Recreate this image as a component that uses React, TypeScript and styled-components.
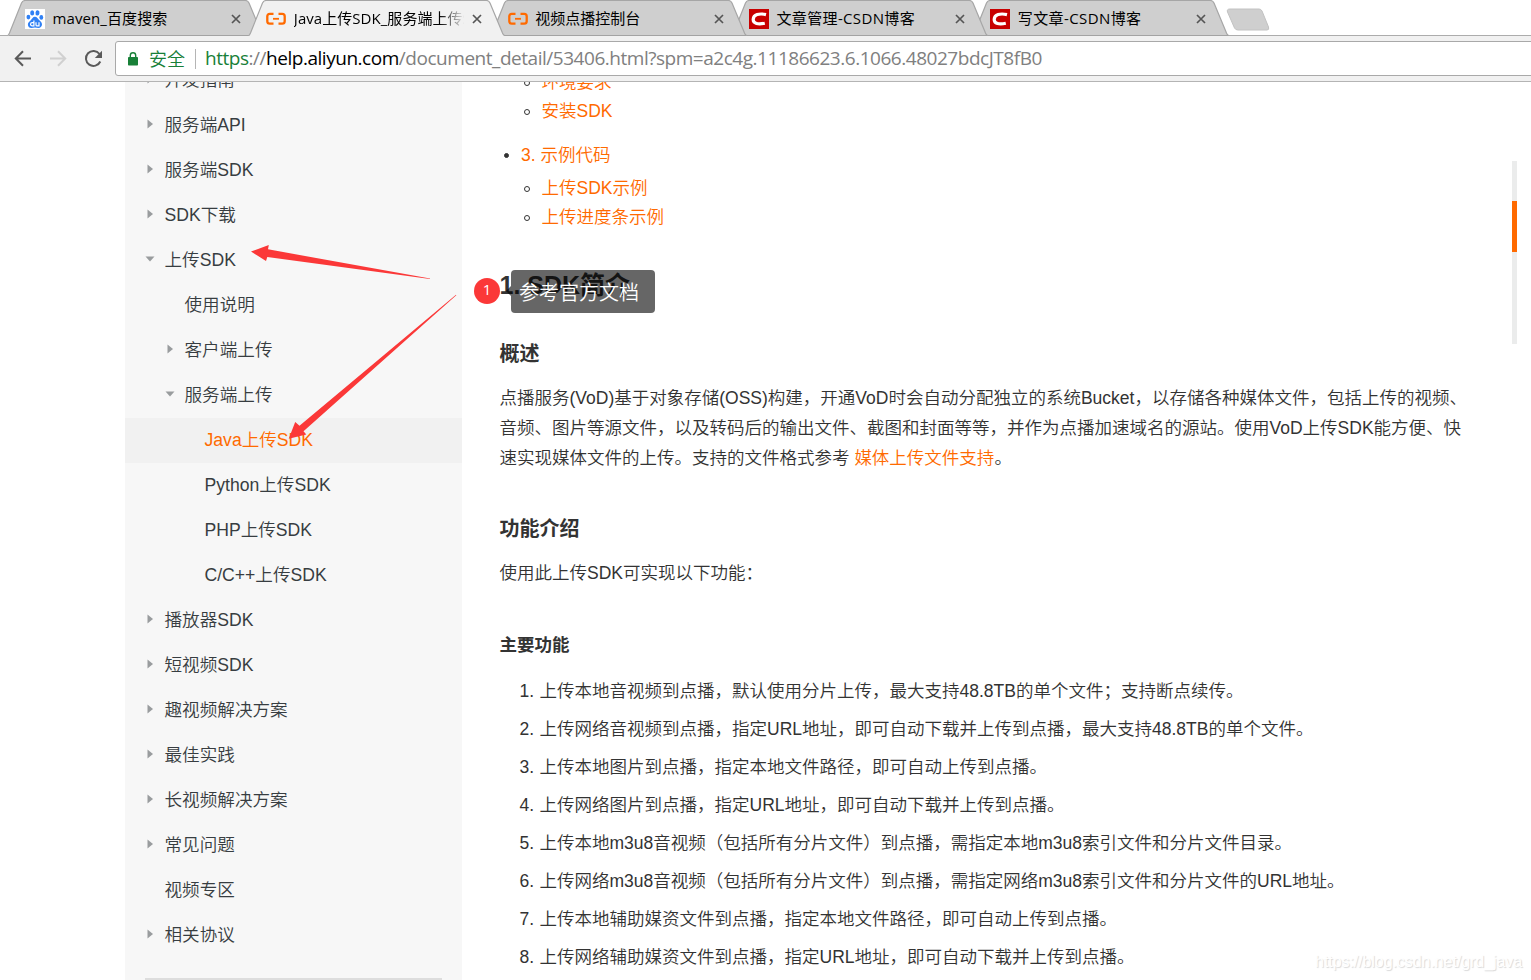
import React from "react";
import styled, { createGlobalStyle, css } from "styled-components";

const GlobalStyle = createGlobalStyle`
  * { box-sizing: border-box; }
  html, body { margin: 0; padding: 0; }
  body {
    background: #fff;
    font-family: "Liberation Sans", "Noto Sans CJK SC", sans-serif;
    font-weight: 350;
    overflow: hidden;
  }
  ul, ol, h1, h2, h3, p { margin: 0; padding: 0; list-style: none; }
`;

const uiFont = css`
  font-family: "Open Sans", "Noto Sans CJK SC", sans-serif;
  font-weight: 400;
`;

const Window = styled.div`
  position: relative;
  width: 1531px;
  height: 980px;
  display: flex;
  flex-direction: column;
  overflow: hidden;
`;

/* ---------- browser chrome ---------- */

const TabStrip = styled.div`
  display: flex;
  flex: none;
  height: 36px;
  padding-left: 7px;
  border-bottom: 1px solid #acacac;
  background: #fff;
`;

const TabItem = styled.div<{ $order: number }>`
  position: relative;
  z-index: ${(p) => p.$order};
  display: flex;
  align-items: center;
  flex: none;
  width: 258px;
  height: 36px;
  margin-right: -16.7px;
  padding: 1px 20px 0 18px;
`;

const TabShape = styled.svg`
  position: absolute;
  left: 0;
  top: 0;
  z-index: -1;
`;

const TabTitle = styled.span<{ $fade?: boolean; $tracking?: number }>`
  ${uiFont}
  flex: none;
  width: 170px;
  height: 24px;
  margin-left: 7.5px;
  overflow: hidden;
  white-space: nowrap;
  font-size: 15px;
  line-height: 22px;
  letter-spacing: ${(p) => p.$tracking ?? 0}px;
  color: #000;
  ${(p) =>
    p.$fade &&
    css`
      mask-image: linear-gradient(to right, #000 145px, transparent 171px);
    `}
`;

const CloseIcon = styled.svg`
  flex: none;
  margin-left: 8.5px;
`;

const NewTab = styled.svg`
  flex: none;
  margin: 8px 0 0 11px;
`;

const Toolbar = styled.div`
  display: flex;
  align-items: center;
  flex: none;
  height: 46px;
  border-bottom: 1px solid #b4b4b4;
  background: #f1f1f1;
`;

const NavIcons = styled.svg`
  flex: none;
  width: 115px;
  height: 45px;
`;

const AddressBar = styled.div`
  ${uiFont}
  display: flex;
  align-items: center;
  flex: 1;
  height: 35px;
  margin-right: -4px;
  padding-left: 12px;
  border: 1px solid #a9a9a9;
  border-radius: 3px;
  background: #fff;
  font-size: 19px;
  white-space: nowrap;
`;

const Secure = styled.span`
  margin-left: 11px;
  padding-right: 10px;
  border-right: 1px solid #b5b5b5;
  font-size: 18px;
  font-weight: 350;
  line-height: 20px;
  color: #188038;
`;

const Url = styled.span`
  margin-left: 9px;
  padding-bottom: 2px;
  letter-spacing: -0.47px;
  color: #808080;
`;

const Scheme = styled.span`
  color: #188038;
`;

const Host = styled.span`
  color: #000;
`;

/* ---------- page ---------- */

const Page = styled.div`
  display: flex;
  flex: 1;
  min-height: 0;
  padding-left: 125px;
  overflow: hidden;
`;

const Sidebar = styled.nav`
  flex: none;
  width: 337px;
  height: 898px;
  overflow: hidden;
  background: #f7f7f7;
`;

const Tree = styled.ul`
  margin-top: -24px;
`;

const TreeRow = styled.li<{ $level: number; $active?: boolean }>`
  display: flex;
  align-items: center;
  height: 45px;
  padding-left: ${(p) => 19 + p.$level * 20}px;
  padding-bottom: 4px;
  background: ${(p) => (p.$active ? "#f1f1f1" : "transparent")};
  color: ${(p) => (p.$active ? "#ff6a00" : "#373d41")};
  font-size: 17.6px;
  white-space: nowrap;
`;

const Caret = styled.svg`
  flex: none;
  width: 12px;
  height: 12px;
  margin-top: 1px;
  margin-right: 8.5px;
`;

const SidebarRule = styled.div`
  height: 2px;
  margin: 20px 20px 0;
  background: #ddd;
`;

const Article = styled.main`
  flex: none;
  width: 1050px;
  margin-top: -16px;
  padding-left: 37.5px;
  color: #333;
  font-size: 17.5px;
  white-space: nowrap;
`;

const TocItem = styled.div`
  display: flex;
  align-items: center;
  height: 30px;
  margin: 14px 0 4px;
  padding-left: 4.5px;
`;

const TocSubItem = styled.div`
  display: flex;
  align-items: center;
  height: 29px;
  padding-left: 24.5px;
`;

const Bullet = styled.i<{ $hollow?: boolean }>`
  flex: none;
  width: ${(p) => (p.$hollow ? 6 : 5)}px;
  height: ${(p) => (p.$hollow ? 6 : 5)}px;
  margin: 4px ${(p) => (p.$hollow ? 11.5 : 12)}px 0 0;
  border: 1px solid #333;
  border-radius: 50%;
  background: ${(p) => (p.$hollow ? "transparent" : "#333")};
`;

const Link = styled.a`
  color: #ff6a00;
`;

const Title = styled.h1`
  margin-top: 35px;
  font-size: 25px;
  line-height: 40px;
  font-weight: 700;
`;

const Heading = styled.h2<{ $gap: number }>`
  margin-top: ${(p) => p.$gap}px;
  font-size: 20px;
  line-height: 40px;
  font-weight: 700;
`;

const SubHeading = styled.h3`
  margin-top: 37px;
  font-size: 17.5px;
  line-height: 40px;
  font-weight: 700;
`;

const Paragraph = styled.p`
  margin-top: 9px;
  line-height: 30px;
`;

const Line = styled.span`
  display: block;
`;

const Features = styled.ol`
  margin-top: 7px;
`;

const Feature = styled.li`
  display: flex;
  height: 38px;
  line-height: 38px;
`;

const FeatureNumber = styled.span`
  width: 34.5px;
  margin-right: 5.5px;
  text-align: right;
`;

const FeatureText = styled.span``;

const ScrollRail = styled.div`
  flex: none;
  width: 5px;
  height: 183px;
  margin-top: 79px;
  margin-left: -0.5px;
  padding-top: 40px;
  background: #ebecec;
`;

const ScrollThumb = styled.div`
  height: 51px;
  background: #ff6a00;
`;

/* ---------- annotations over the page ---------- */

const Arrows = styled.svg`
  position: absolute;
  left: 0;
  top: 0;
  z-index: 20;
  pointer-events: none;
`;

const StepBadge = styled.div`
  position: absolute;
  left: 474px;
  top: 278px;
  z-index: 21;
  width: 26px;
  height: 26px;
  border-radius: 50%;
  background: #fb3838;
  color: #fff;
  ${uiFont}
  font-size: 15px;
  line-height: 23px;
  text-align: center;
`;

const Note = styled.div`
  position: absolute;
  left: 511px;
  top: 270px;
  z-index: 21;
  width: 144px;
  height: 43px;
  padding-left: 8px;
  border-radius: 4px;
  background: rgba(0, 0, 0, 0.6);
  color: #fff;
  font-size: 20px;
  line-height: 46px;
  white-space: nowrap;

  &::before {
    content: "";
    position: absolute;
    left: -5px;
    top: 16px;
    border: 5px solid transparent;
    border-left: 0;
    border-right-color: rgba(0, 0, 0, 0.6);
  }
`;

const Watermark = styled.div`
  position: absolute;
  right: 9px;
  bottom: 8px;
  z-index: 21;
  font-size: 16px;
  line-height: 20px;
  letter-spacing: -0.07px;
  color: #fff;
  text-shadow: 1px 1px 1px #d8d8d8;
`;

/* ---------- drawings ---------- */

const BaiduIcon = () => (
  <svg width="20" height="20" viewBox="0 0 20 20">
    <rect width="20" height="20" fill="#fff" />
    <g fill="#2f80f5">
      <ellipse cx="7.2" cy="3.9" rx="2" ry="2.7" />
      <ellipse cx="12.5" cy="3.9" rx="2" ry="2.7" transform="rotate(8 12.5 3.9)" />
      <ellipse cx="3.4" cy="8.1" rx="1.9" ry="2.4" />
      <ellipse cx="16.3" cy="8.4" rx="1.9" ry="2.4" />
      <path d="M9.9 7.8c2.2 0 2.9 1.9 4.2 3.3 1.400 1.400 3.100 2.500 2.900 4.700-.2 2-1.700 3.200-3.600 3.200-1.200 0-2.200-.4-3.500-.4s-2.200.4-3.400.4c-2 0-3.500-1.300-3.600-3.300-.1-2.100 1.500-3.100 2.900-4.500C7.200 9.700 7.800 7.800 9.900 7.800z" />
    </g>
    <g fill="none" stroke="#fff" strokeWidth="1.2">
      <path d="M8.900 11.600v5.300H7.200c-2.200 0-2.200-3.200 0-3.200h1.700" />
      <path d="M11 13.200v2.700c0 .8.400 1 1.100 1h1.900v-3.700" />
    </g>
  </svg>
);

const AliyunIcon = () => (
  <svg width="20" height="20" viewBox="0 0 20 20">
    <g fill="none" stroke="#ff6a00" strokeWidth="2.300">
      <path d="M7.500 4.900H3.800Q1.300 4.900 1.300 7.300v5q0 2.400 2.500 2.400h3.700" />
      <path d="M12.500 4.900h3.700q2.500 0 2.500 2.400v5q0 2.400-2.500 2.400h-3.700" />
    </g>
    <rect x="7" y="8.900" width="6" height="1.800" fill="#ff6a00" />
  </svg>
);

const CsdnIcon = () => (
  <svg width="20" height="20" viewBox="0 0 20 20">
    <rect width="20" height="20" fill="#c80000" />
    <path
      d="M17 5.600C10 4 4.500 5.600 4.200 10.300c-.2 4.400 5 5.300 11.600 3.900"
      fill="none"
      stroke="#fff"
      strokeWidth="3.200"
    />
  </svg>
);

type TabData = {
  title: string;
  icon: React.ReactNode;
  active?: boolean;
  tracking?: number;
};

const tabs: TabData[] = [
  { title: "maven_百度搜索", icon: <BaiduIcon />, tracking: 0.1 },
  { title: "Java上传SDK_服务端上传SDK", icon: <AliyunIcon />, active: true, tracking: 0.05 },
  { title: "视频点播控制台", icon: <AliyunIcon /> },
  { title: "文章管理-CSDN博客", icon: <CsdnIcon />, tracking: 0.36 },
  { title: "写文章-CSDN博客", icon: <CsdnIcon />, tracking: 0.4 },
];

const Tab = ({ tab, order }: { tab: TabData; order: number }) => (
  <TabItem $order={order}>
    <TabShape width="258" height="36" viewBox="0 0 258 36">
      <path
        d="M0.500 36C1.500 35.500 2 34 2.500 33L14.500 3Q15.700 0.500 18 0.500H238.500Q240.800 0.500 242 3L254.500 33C255 34 255.500 35.500 257 36Z"
        fill={tab.active ? "#f1f1f1" : "#cfcfcf"}
      />
      <path
        d="M0.500 35.500C1.500 35.500 2 34 2.500 33L14.500 3Q15.700 0.500 18 0.500H238.500Q240.800 0.500 242 3L254.500 33C255 34 255.500 35.500 257 35.500"
        fill="none"
        stroke="#a6a6a6"
        strokeWidth="1.200"
      />
      {!tab.active && <path d="M2 35.500H256" stroke="#a3a3a3" />}
    </TabShape>
    {tab.icon}
    <TabTitle $fade={tab.active} $tracking={tab.tracking}>
      {tab.title}
    </TabTitle>
    <CloseIcon width="10" height="10" viewBox="0 0 10 10">
      <path d="M1 1L9 9M9 1L1 9" stroke="#555" strokeWidth="1.700" />
    </CloseIcon>
  </TabItem>
);

type Node = { label: string; level: number; state?: "open" | "closed"; active?: boolean };

const tree: Node[] = [
  { label: "开发指南", level: 0, state: "closed" },
  { label: "服务端API", level: 0, state: "closed" },
  { label: "服务端SDK", level: 0, state: "closed" },
  { label: "SDK下载", level: 0, state: "closed" },
  { label: "上传SDK", level: 0, state: "open" },
  { label: "使用说明", level: 1 },
  { label: "客户端上传", level: 1, state: "closed" },
  { label: "服务端上传", level: 1, state: "open" },
  { label: "Java上传SDK", level: 2, active: true },
  { label: "Python上传SDK", level: 2 },
  { label: "PHP上传SDK", level: 2 },
  { label: "C/C++上传SDK", level: 2 },
  { label: "播放器SDK", level: 0, state: "closed" },
  { label: "短视频SDK", level: 0, state: "closed" },
  { label: "趣视频解决方案", level: 0, state: "closed" },
  { label: "最佳实践", level: 0, state: "closed" },
  { label: "长视频解决方案", level: 0, state: "closed" },
  { label: "常见问题", level: 0, state: "closed" },
  { label: "视频专区", level: 0 },
  { label: "相关协议", level: 0, state: "closed" },
];

const features: string[] = [
  "上传本地音视频到点播，默认使用分片上传，最大支持48.8TB的单个文件；支持断点续传。",
  "上传网络音视频到点播，指定URL地址，即可自动下载并上传到点播，最大支持48.8TB的单个文件。",
  "上传本地图片到点播，指定本地文件路径，即可自动上传到点播。",
  "上传网络图片到点播，指定URL地址，即可自动下载并上传到点播。",
  "上传本地m3u8音视频（包括所有分片文件）到点播，需指定本地m3u8索引文件和分片文件目录。",
  "上传网络m3u8音视频（包括所有分片文件）到点播，需指定网络m3u8索引文件和分片文件的URL地址。",
  "上传本地辅助媒资文件到点播，指定本地文件路径，即可自动上传到点播。",
  "上传网络辅助媒资文件到点播，指定URL地址，即可自动下载并上传到点播。",
];

export default function App() {
  return (
    <Window>
      <GlobalStyle />
      <TabStrip>
        {tabs.map((tab, i) => (
          <Tab key={tab.title} tab={tab} order={tab.active ? 10 : 6 - i} />
        ))}
        <NewTab width="46" height="24" viewBox="0 0 46 24">
          <path
            d="M5 1H34Q36 1 37 3L43.500 19Q44.500 22 42 22H13Q10.500 22 9.500 20L2.500 4Q1.500 1 5 1Z"
            fill="#cfcfcf"
            stroke="#c2c2c2"
          />
        </NewTab>
      </TabStrip>
      <Toolbar>
        <NavIcons viewBox="0 0 115 45">
          <g fill="none" strokeWidth="2">
            <path d="M31 22.500H16M23 15.300L15.800 22.500L23 29.700" stroke="#5a5a5a" />
            <path d="M50 22.500H65M58 15.300L65.200 22.500L58 29.700" stroke="#d0d0d0" />
            <path d="M99.500 18A7.500 7.500 0 1 0 100.300 25.500" stroke="#5a5a5a" />
          </g>
          <path d="M102 14.800V22H94.800Z" fill="#5a5a5a" />
        </NavIcons>
        <AddressBar>
          <svg width="10" height="14" viewBox="0 0 10 14">
            <rect y="5" width="10" height="8.500" rx="0.800" fill="#188038" />
            <path d="M2.300 5.500V3.500a2.700 2.700 0 0 1 5.400 0v2" fill="none" stroke="#188038" strokeWidth="1.400" />
          </svg>
          <Secure>安全</Secure>
          <Url>
            <Scheme>https</Scheme>://<Host>help.aliyun.com</Host>
            /document_detail/53406.html?spm=a2c4g.11186623.6.1066.48027bdcJT8fB0
          </Url>
        </AddressBar>
      </Toolbar>

      <Page>
        <Sidebar>
          <Tree>
            {tree.map((node) => (
              <TreeRow key={node.label} $level={node.level} $active={node.active}>
                <Caret viewBox="0 0 12 12">
                  {node.state === "closed" && <path d="M3.500 1.500L9 6L3.500 10.500Z" fill="#999c9e" />}
                  {node.state === "open" && <path d="M1.500 3.500H10.500L6 8.500Z" fill="#999c9e" />}
                </Caret>
                {node.label}
              </TreeRow>
            ))}
          </Tree>
          <SidebarRule />
        </Sidebar>

        <Article>
          <TocSubItem>
            <Bullet $hollow />
            <Link>环境要求</Link>
          </TocSubItem>
          <TocSubItem>
            <Bullet $hollow />
            <Link>安装SDK</Link>
          </TocSubItem>
          <TocItem>
            <Bullet />
            <Link>3. 示例代码</Link>
          </TocItem>
          <TocSubItem>
            <Bullet $hollow />
            <Link>上传SDK示例</Link>
          </TocSubItem>
          <TocSubItem>
            <Bullet $hollow />
            <Link>上传进度条示例</Link>
          </TocSubItem>

          <Title>1. SDK简介</Title>
          <Heading $gap={29}>概述</Heading>
          <Paragraph>
            <Line>
              点播服务(VoD)基于对象存储(OSS)构建，开通VoD时会自动分配独立的系统Bucket，以存储各种媒体文件，包括上传的视频、
            </Line>
            <Line>
              音频、图片等源文件，以及转码后的输出文件、截图和封面等等，并作为点播加速域名的源站。使用VoD上传SDK能方便、快
            </Line>
            <Line>
              速实现媒体文件的上传。支持的文件格式参考 <Link>媒体上传文件支持</Link>。
            </Line>
          </Paragraph>
          <Heading $gap={36}>功能介绍</Heading>
          <Paragraph>使用此上传SDK可实现以下功能：</Paragraph>
          <SubHeading>主要功能</SubHeading>
          <Features>
            {features.map((text, i) => (
              <Feature key={text}>
                <FeatureNumber>{i + 1}.</FeatureNumber>
                <FeatureText>{text}</FeatureText>
              </Feature>
            ))}
          </Features>
        </Article>

        <ScrollRail>
          <ScrollThumb />
        </ScrollRail>
      </Page>

      <Arrows width="1531" height="980" viewBox="0 0 1531 980" fill="#fb3838">
        <path d="M251 251.500L268.800 245L268 249.300L430 278.600V279L267.300 257L266 261Z" />
        <path d="M288.700 438.700L295.200 422L299.500 425.800L456 294.800L456.300 295.200L303.500 431.200L306.300 434.500Z" />
      </Arrows>
      <StepBadge>1</StepBadge>
      <Note>参考官方文档</Note>
      <Watermark>https://blog.csdn.net/grd_java</Watermark>
    </Window>
  );
}
